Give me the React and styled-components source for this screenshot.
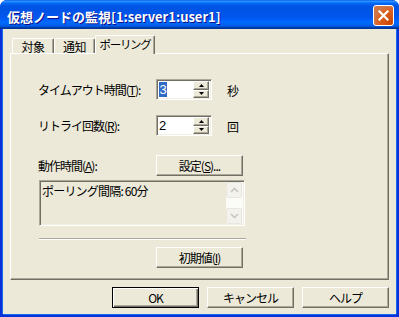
import React from 'react';
import styled, { createGlobalStyle } from 'styled-components';

const Global = createGlobalStyle`
  html, body { margin: 0; padding: 0; background: #ffffff; }
  body {
    font-family: "Noto Sans CJK JP", "Noto Sans", sans-serif;
    font-size: 12px;
    color: #000;
  }
  #root { width: 399px; height: 317px; }
`;

const Window = styled.div`
  width: 399px;
  height: 317px;
  display: flex;
  flex-direction: column;
  box-sizing: border-box;
  border-radius: 7px 7px 0 0;
  overflow: hidden;
  background: #0831d9;
`;

const TitleBar = styled.div`
  height: 29px;
  flex: none;
  display: flex;
  align-items: flex-start;
  justify-content: space-between;
  box-sizing: border-box;
  padding: 0 5px 0 7px;
  background: linear-gradient(
    to bottom,
    #0058ee 0%, #3593ff 4%, #288eff 6%, #127dff 8%, #036ffc 10%,
    #0262ee 14%, #0057e5 20%, #0054e3 24%, #0055eb 56%, #005bf5 66%,
    #026afe 76%, #0062ef 86%, #0052d6 92%, #0040ab 94%, #003092 100%
  );
`;

const Title = styled.div`
  color: #fff;
  font-weight: bold;
  font-size: 13px;
  line-height: 15px;
  padding-top: 9px;
  text-shadow: 1px 1px #0f1089;
  white-space: nowrap;
`;

const CloseButton = styled.div`
  margin-top: 5px;
  width: 21px;
  height: 21px;
  box-sizing: border-box;
  border: 1px solid #fff;
  border-radius: 3px;
  background: radial-gradient(circle at 85% 85%, #cc4600 0%, #dc6527 55%, #cd7546 70%) , #e05a2a;
  display: flex;
  align-items: center;
  justify-content: center;
`;

const Body = styled.div`
  flex: 1;
  margin: 0 3px 3px;
  background: #ece9d8;
  box-shadow: -1px 0 0 #166aee, 1px 0 0 #166aee, 0 1px 0 #166aee;
  box-sizing: border-box;
  padding: 6px 7px 0;
  display: flex;
  flex-direction: column;
`;

const TabStrip = styled.div`
  height: 18px;
  display: flex;
  align-items: flex-end;
  padding-left: 2px;
`;

const Tab = styled.div`
  box-sizing: border-box;
  width: ${p => p.$w}px;
  height: ${p => (p.$active ? 19 : 15)}px;
  margin-bottom: ${p => (p.$active ? -1 : 0)}px;
  position: relative;
  z-index: ${p => (p.$active ? 1 : 0)};
  background: #ece9d8;
  border-top: 1px solid #fff;
  border-left: 1px solid #fff;
  border-right: 1px solid #716f64;
  box-shadow: inset -1px 0 #aca899;
  border-radius: 2px 2px 0 0;
  display: flex;
  justify-content: center;
  align-items: ${p => (p.$active ? 'flex-start' : 'center')};
  padding-top: ${p => (p.$active ? 2 : 0)}px;
  line-height: 13px;
  font-size: ${p => (p.$active ? 11.5 : 12)}px;
  letter-spacing: ${p => (p.$active ? -1.3 : -0.5)}px;
  white-space: nowrap;
`;

const Panel = styled.div`
  box-sizing: border-box;
  height: 227px;
  border-top: 1px solid #fff;
  border-left: 1px solid #fff;
  border-right: 1px solid #716f64;
  border-bottom: 1px solid #716f64;
  box-shadow: inset -1px -1px #aca899;
  padding: 25px 0 0 27px;
  display: flex;
  flex-direction: column;
  align-items: flex-start;
`;

const Row = styled.div`
  display: flex;
  align-items: center;
  height: 21px;
  margin-bottom: ${p => p.$gap || 0}px;
`;

const Label = styled.div`
  width: 118px;
  letter-spacing: -1px;
  white-space: nowrap;
  line-height: 14px;
`;

const Unit = styled.div`
  margin-left: 15px;
  line-height: 14px;
  margin-top: 3px;
`;

const Sunken = styled.div`
  box-sizing: border-box;
  border: 1px solid;
  border-color: #aca899 #fff #fff #aca899;
  box-shadow: inset 1px 1px #716f64, inset -1px -1px #f1efe2;
`;

const Spinner = styled(Sunken)`
  width: 56px;
  height: 21px;
  background: #fff;
  display: flex;
  padding: 1px 2px 1px 1px;
`;

const Edit = styled.div`
  flex: 1;
  padding: 2px 0 0 1px;
  line-height: 13px;
  font-size: 13px;
  font-family: "Liberation Sans", sans-serif;
`;

const Selected = styled.span`
  background: #316ac5;
  color: #fff;
  padding: 0 0.5px;
`;

const SpinColumn = styled.div`
  width: 16px;
  display: flex;
  flex-direction: column;
`;

const SpinButton = styled.div`
  flex: 1;
  box-sizing: border-box;
  background: #ece9d8;
  border: 1px solid;
  border-color: #fff #716f64 #716f64 #fff;
  box-shadow: inset -1px -1px #aca899;
  display: flex;
  align-items: center;
  justify-content: center;
`;

const Button = styled.div`
  box-sizing: border-box;
  width: 87px;
  height: 21px;
  margin-left: ${p => p.$ml || 0}px;
  margin-top: ${p => p.$mt || 0}px;
  background: #ece9d8;
  border: 1px solid;
  border-color: ${p => (p.$default ? '#000' : '#fff #716f64 #716f64 #fff')};
  box-shadow: ${p =>
    p.$default
      ? 'inset 1px 1px #fff, inset -1px -1px #716f64, inset -2px -2px #aca899'
      : 'inset -1px -1px #aca899'};
  display: flex;
  align-items: center;
  justify-content: center;
  line-height: 14px;
  letter-spacing: -1px;
  white-space: nowrap;
`;

const ListBox = styled(Sunken)`
  margin: 4px 0 0 1px;
  width: 206px;
  height: 46px;
  background: #ece9d8;
  display: flex;
  padding: 1px;
`;

const ListText = styled.div`
  flex: 1;
  padding: 2px 0 0 1px;
  line-height: 14px;
  letter-spacing: -0.8px;
  white-space: pre;
`;

const ScrollBar = styled.div`
  width: 17px;
  display: flex;
  flex-direction: column;
  background: #fbfbf8;
  padding-right: 1px;
  box-sizing: border-box;
`;

const ScrollArrow = styled.div`
  height: 16px;
  box-sizing: border-box;
  border: 1px solid #e8e7df;
  border-radius: 2px;
  background: #f3f2ec;
  display: flex;
  align-items: center;
  justify-content: center;
`;

const Track = styled.div`
  flex: 1;
`;

const Separator = styled.div`
  margin: 12px 0 0 1px;
  width: 207px;
  height: 0;
  border-top: 1px solid #aca899;
  border-bottom: 1px solid #fff;
`;

const ButtonRow = styled.div`
  margin-top: 7px;
  display: flex;
  justify-content: flex-end;
  gap: 8px;
`;

const Tri = ({ up }) => (
  <svg width="5" height="3" viewBox="0 0 5 3">
    <polygon points={up ? '2.5,0 5,3 0,3' : '0,0 5,0 2.5,3'} fill="#000" />
  </svg>
);

const Chevron = ({ up }) => (
  <svg width="9" height="6" viewBox="0 0 9 6">
    <polyline
      points={up ? '1,5 4.5,1.5 8,5' : '1,1 4.5,4.5 8,1'}
      fill="none"
      stroke="#c9c8c0"
      strokeWidth="1.6"
    />
  </svg>
);

const SpinBox = ({ children }) => (
  <Spinner>
    <Edit>{children}</Edit>
    <SpinColumn>
      <SpinButton><Tri up /></SpinButton>
      <SpinButton><Tri /></SpinButton>
    </SpinColumn>
  </Spinner>
);

export default function App() {
  return (
    <>
      <Global />
      <Window>
        <TitleBar>
          <Title>仮想ノードの監視[1:server1:user1]</Title>
          <CloseButton>
            <svg width="11" height="11" viewBox="0 0 11 11">
              <path d="M1.5 1.5 L9.5 9.5 M9.5 1.5 L1.5 9.5" stroke="#fff" strokeWidth="2.2" strokeLinecap="square" />
            </svg>
          </CloseButton>
        </TitleBar>
        <Body>
          <TabStrip>
            <Tab $w={42}>対象</Tab>
            <Tab $w={41}>通知</Tab>
            <Tab $w={60} $active>ポーリング</Tab>
          </TabStrip>
          <Panel>
            <Row $gap={15}>
              <Label>タイムアウト時間(<u>T</u>):</Label>
              <SpinBox><Selected>3</Selected></SpinBox>
              <Unit>秒</Unit>
            </Row>
            <Row $gap={19}>
              <Label>リトライ回数(<u>R</u>):</Label>
              <SpinBox>2</SpinBox>
              <Unit>回</Unit>
            </Row>
            <Row>
              <Label>動作時間(<u>A</u>):</Label>
              <Button>設定(<u>S</u>)...</Button>
            </Row>
            <ListBox>
              <ListText>{'ポーリング間隔: 60分'}</ListText>
              <ScrollBar>
                <ScrollArrow><Chevron up /></ScrollArrow>
                <Track />
                <ScrollArrow><Chevron /></ScrollArrow>
              </ScrollBar>
            </ListBox>
            <Separator />
            <Button $ml={118} $mt={7}>初期値(<u>I</u>)</Button>
          </Panel>
          <ButtonRow>
            <Button $default>OK</Button>
            <Button>キャンセル</Button>
            <Button>ヘルプ</Button>
          </ButtonRow>
        </Body>
      </Window>
    </>
  );
}
